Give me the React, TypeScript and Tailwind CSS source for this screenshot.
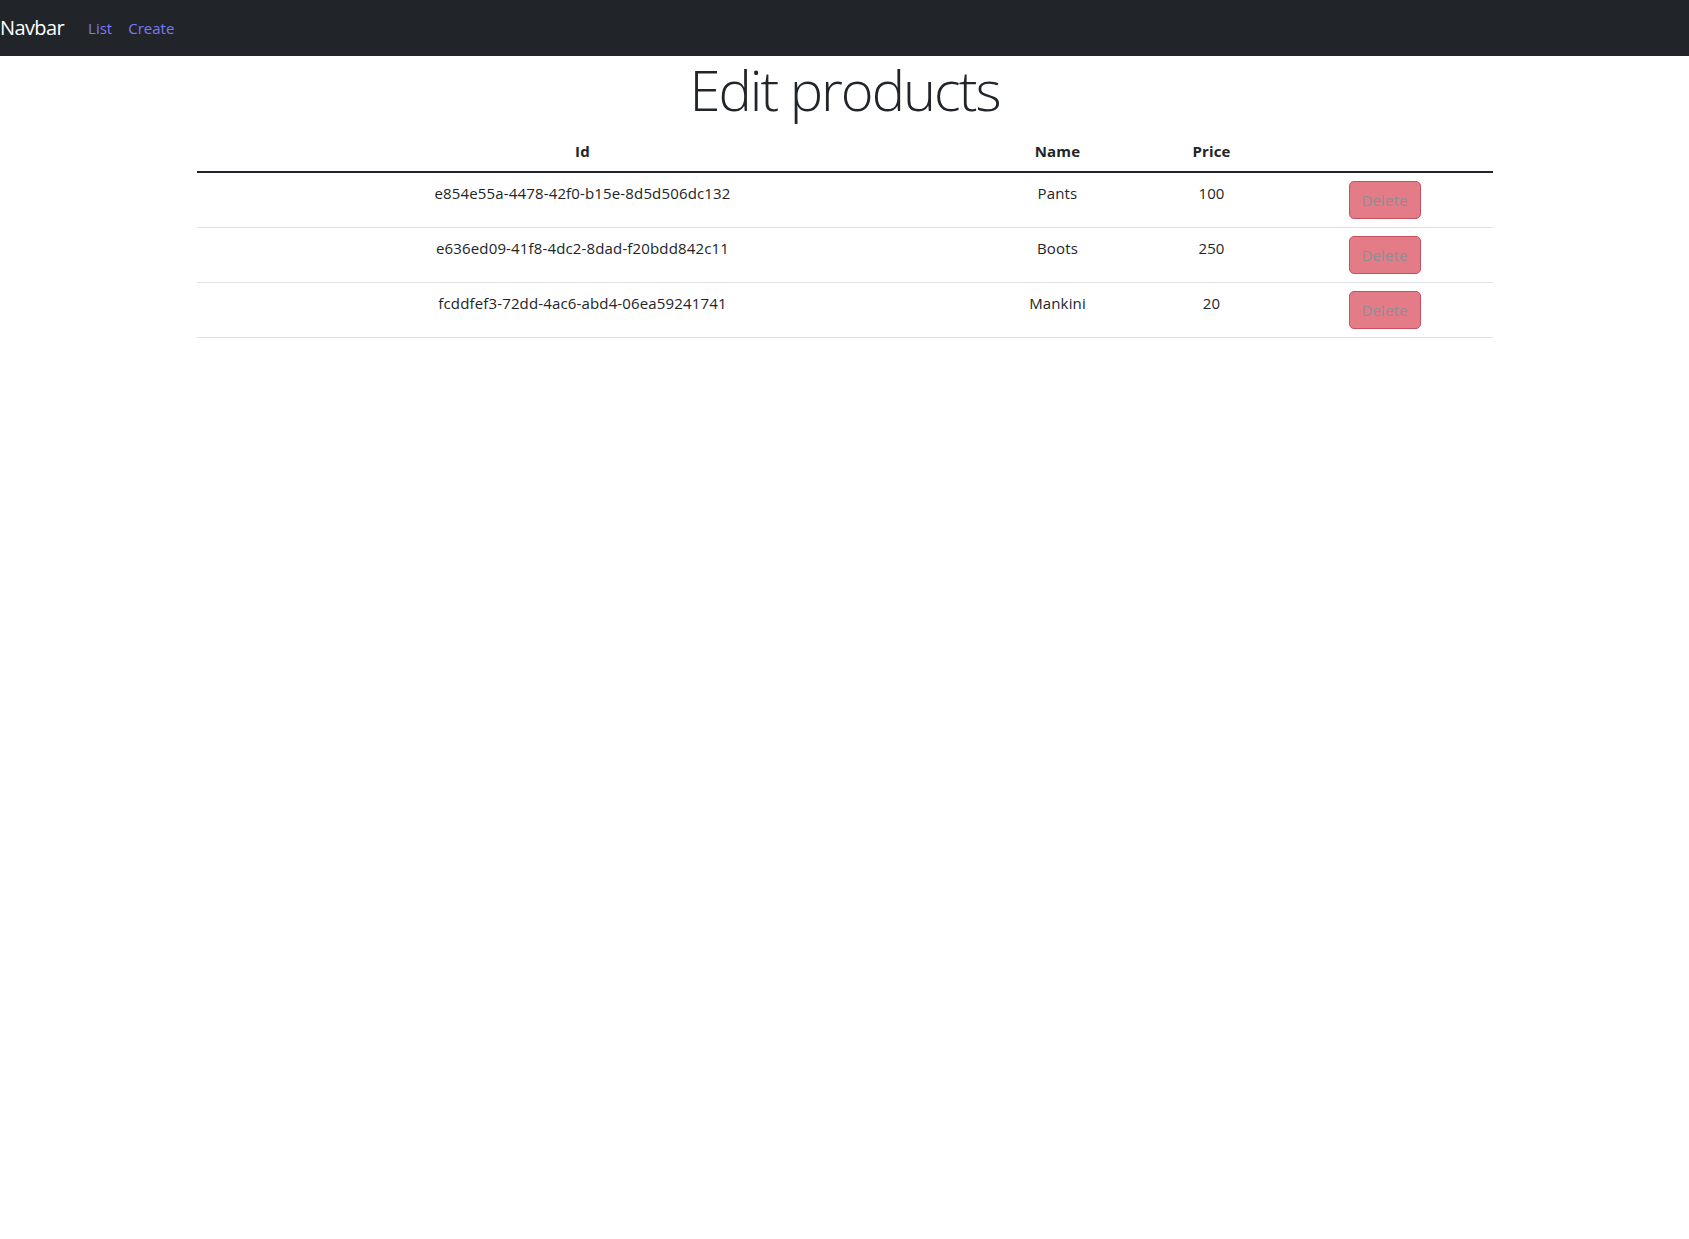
import React from "react";

const products = [
  { id: "e854e55a-4478-42f0-b15e-8d5d506dc132", name: "Pants", price: 100 },
  { id: "e636ed09-41f8-4dc2-8dad-f20bdd842c11", name: "Boots", price: 250 },
  { id: "fcddfef3-72dd-4ac6-abd4-06ea59241741", name: "Mankini", price: 20 },
];

export default function App() {
  return (
    <div className="min-h-screen bg-white text-[#212529] font-['Open_Sans',sans-serif]">
      <nav className="flex h-14 items-center bg-[#212529]">
        <a className="pr-4 text-[20px] leading-[30px] text-white tracking-[-0.6px]">Navbar</a>
        <div className="flex items-center gap-4 pl-2 text-[15px] text-[#7a7af4]">
          <a>List</a>
          <a>Create</a>
        </div>
      </nav>

      <main className="mx-auto w-[1320px] px-3">
        <h1 className="mb-2 text-center text-[56px] font-light leading-[67px] tracking-[-2px]">Edit products</h1>

        <table className="w-full table-fixed border-collapse text-center text-[15px] tracking-[0.15px]">
          <colgroup>
            <col className="w-[772px]" />
            <col className="w-[178px]" />
            <col className="w-[130px]" />
            <col className="w-[216px]" />
          </colgroup>
          <thead>
            <tr className="border-b-2 border-[#212529]">
              <th className="px-2 py-2 font-bold leading-6">Id</th>
              <th className="px-2 py-2 font-bold leading-6">Name</th>
              <th className="px-2 py-2 font-bold leading-6">Price</th>
              <th className="px-2 py-2"></th>
            </tr>
          </thead>
          <tbody>
            {products.map((p) => (
              <tr key={p.id} className="border-b border-[#dee2e6]">
                <td className="px-2 py-2 align-top leading-6">{p.id}</td>
                <td className="px-2 py-2 align-top leading-6">{p.name}</td>
                <td className="px-2 py-2 align-top leading-6">{p.price}</td>
                <td className="px-2 py-2 align-top">
                  <button
                    disabled
                    className="h-[38px] w-[72px] rounded-[5px] border border-[#c9505e] bg-[#e47c88] text-[15px] text-[#8a8f94]"
                  >
                    Delete
                  </button>
                </td>
              </tr>
            ))}
          </tbody>
        </table>
      </main>
    </div>
  );
}
